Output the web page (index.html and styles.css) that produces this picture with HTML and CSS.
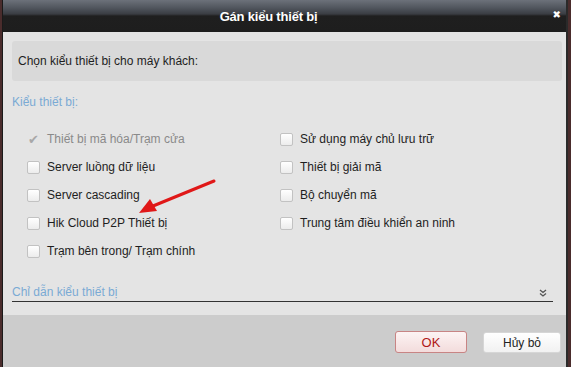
FILE: index.html
```html
<!DOCTYPE html>
<html lang="vi">
<head>
<meta charset="utf-8">
<link rel="stylesheet" href="styles.css">
</head>
<body>
<div class="dialog">
  <div class="titlebar">
    <span class="title">Gán kiểu thiết bị</span>
    <span class="close">&#x2716;</span>
  </div>
  <div class="content">
    <div class="prompt">Chọn kiểu thiết bị cho máy khách:</div>
    <div class="section-label">Kiểu thiết bị:</div>
    <div class="options">
      <div class="col">
        <label class="opt disabled"><span class="tick">&#x2714;</span>Thiết bị mã hóa/Trạm cửa</label>
        <label class="opt"><span class="box"></span>Server luồng dữ liệu</label>
        <label class="opt"><span class="box"></span>Server cascading</label>
        <label class="opt"><span class="box"></span>Hik Cloud P2P Thiết bị</label>
        <label class="opt"><span class="box"></span>Trạm bên trong/ Trạm chính</label>
      </div>
      <div class="col">
        <label class="opt"><span class="box"></span>Sử dụng máy chủ lưu trữ</label>
        <label class="opt"><span class="box"></span>Thiết bị giải mã</label>
        <label class="opt"><span class="box"></span>Bộ chuyển mã</label>
        <label class="opt"><span class="box"></span>Trung tâm điều khiển an ninh</label>
      </div>
    </div>
    <div class="guide">
      <span>Chỉ dẫn kiểu thiết bị</span>
      <svg class="chev" width="8" height="8" viewBox="0 0 8 8"><path d="M1 1 L4 3.5 L7 1 M1 4.5 L4 7 L7 4.5" fill="none" stroke="#555" stroke-width="1.3"/></svg>
    </div>
  </div>
  <div class="footer">
    <button class="btn ok">OK</button>
    <button class="btn cancel">Hủy bỏ</button>
  </div>
  <svg class="arrow" width="571" height="367" viewBox="0 0 571 367">
    <line x1="214" y1="181" x2="153" y2="206" stroke="#e01818" stroke-width="3" stroke-linecap="round"/>
    <polygon points="139,213 150,199 157,211" fill="#e01818"/>
  </svg>
</div>
</body>
</html>
```
FILE: styles.css
```css
html, body {
  margin: 0;
  padding: 0;
}
body {
  width: 571px;
  height: 367px;
  background: #4a2c2c;
  font-family: "Liberation Sans", Arial, sans-serif;
  font-size: 12px;
  overflow: hidden;
}
.dialog {
  position: relative;
  margin-left: 2px;
  width: 566px;
  height: 367px;
  border-left: 1px solid #1a1a1a;
  border-right: 2px solid #2a2a2a;
  box-sizing: border-box;
  display: flex;
  flex-direction: column;
  background: #e4e4e4;
}
.titlebar {
  height: 32px;
  flex: none;
  display: flex;
  align-items: center;
  justify-content: center;
  position: relative;
  background: linear-gradient(#6c717a 0px, #50555d 8px, #3a3d43 14px, #1f1f1f 16px, #1e1e1e 32px);
}
.title {
  color: #fff;
  font-weight: bold;
  font-size: 13px;
  letter-spacing: -0.2px;
  margin-right: 32px;
  margin-top: 1px;
}
.close {
  position: absolute;
  right: 5px;
  top: 9px;
  color: #fff;
  font-size: 10px;
  font-family: "DejaVu Sans", sans-serif;
}
.content {
  flex: 1;
  display: flex;
  flex-direction: column;
  padding: 9px 4px 0 9px;
}
.prompt {
  height: 40px;
  background: #d9d9d9;
  border-radius: 3px;
  display: flex;
  align-items: center;
  padding-left: 6px;
  color: #1e1e1e;
  font-size: 12px;
}
.section-label {
  margin-top: 14px;
  color: #7aaad4;
  font-size: 12px;
  height: 16px;
}
.options {
  display: grid;
  grid-template-columns: 253px 1fr;
  padding-left: 15px;
  margin-top: 14px;
}
.col {
  display: flex;
  flex-direction: column;
}
.opt {
  height: 28px;
  display: flex;
  align-items: center;
  color: #1e1e1e;
  font-size: 12px;
}
.opt.disabled {
  color: #8a8a8a;
}
.box {
  width: 11px;
  height: 11px;
  border: 1px solid #c2c2c2;
  border-radius: 2px;
  background: linear-gradient(#ffffff, #ececec);
  margin-right: 7px;
  flex: none;
}
.tick {
  width: 13px;
  margin-right: 7px;
  color: #a8a8a8;
  font-size: 13px;
  font-family: "DejaVu Sans", sans-serif;
  text-align: center;
  flex: none;
}
.guide {
  margin-top: 18px;
  width: 541px;
  height: 19px;
  border-bottom: 1px solid #333;
  display: flex;
  align-items: center;
  justify-content: space-between;
  color: #7aaad4;
  font-size: 12px;
  padding-right: 6px;
  box-sizing: border-box;
}
.chev {
  margin-top: 1px;
}
.footer {
  height: 52px;
  flex: none;
  background: #cccccc;
  display: flex;
  justify-content: flex-end;
  align-items: flex-start;
  padding: 16px 5px 0 0;
  box-sizing: border-box;
  gap: 16px;
}
.btn {
  height: 22px;
  font-family: "Liberation Sans", Arial, sans-serif;
  font-size: 12px;
  border-radius: 3px;
  padding: 0;
}
.ok {
  width: 72px;
  border: 1px solid #c88484;
  background: linear-gradient(#fdf3f3, #f3dcdc);
  color: #b01818;
  font-size: 13px;
}
.cancel {
  width: 78px;
  border: 1px solid #d6d6d6;
  background: linear-gradient(#ffffff, #f1f1f1);
  color: #222;
  margin-top: 1px;
  height: 21px;
}
.arrow {
  position: absolute;
  left: -3px;
  top: 0;
  pointer-events: none;
}
```
